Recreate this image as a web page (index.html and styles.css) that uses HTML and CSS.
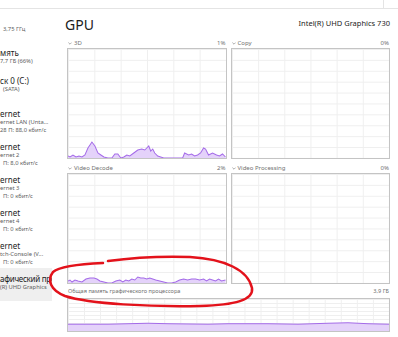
FILE: index.html
```html
<!DOCTYPE html>
<html lang="ru">
<head>
<meta charset="utf-8">
<title>GPU</title>
<link rel="stylesheet" href="styles.css">
</head>
<body>
<div class="topbar"><span class="topbar-tick"></span></div>
<div class="layout">
  <nav class="sidebar">
    <div class="item item-cpu"><div class="sub sub-in">3,75 ГГц</div></div>
    <div class="item item-mem"><div class="title">мять</div><div class="sub">7,7 ГБ (66%)</div></div>
    <div class="item"><div class="title">ск 0 (C:)</div><div class="sub sub-in">(SATA)</div></div>
    <div class="item"><div class="title">ernet</div><div class="sub">ernet LAN (Unta...</div><div class="sub">28 П: 88,0 кбит/с</div></div>
    <div class="item"><div class="title">ernet</div><div class="sub">ernet 2</div><div class="sub sub-in">П: 8,0 кбит/с</div></div>
    <div class="item"><div class="title">ernet</div><div class="sub">ernet 3</div><div class="sub sub-in">П: 0 кбит/с</div></div>
    <div class="item"><div class="title">ernet</div><div class="sub">ernet 4</div><div class="sub sub-in">П: 0 кбит/с</div></div>
    <div class="item"><div class="title">ernet</div><div class="sub">tch-Console (V...</div><div class="sub sub-in">П: 0 кбит/с</div></div>
    <div class="item item-sel"><div class="title title-tight">афический про</div><div class="sub">(R) UHD Graphics</div></div>
  </nav>
  <main class="main">
    <header class="head">
      <h1 class="head-title">GPU</h1>
      <div class="head-model">Intel(R) UHD Graphics 730</div>
    </header>
    <div class="charts">
      <section class="chart">
        <div class="label"><span class="label-name"><svg class="chev" viewBox="0 0 4 3"><polyline points="0.4,0.6 2,2.2 3.6,0.6"/></svg>3D</span><span>1%</span></div>
        <div class="plot">
          <svg class="plot-svg" viewBox="0 0 158 109" preserveAspectRatio="none">
            <path class="area" d="M0,109 L0,107 2,108 5,106 8,108 11,107 14,108 17,106 20,99 24,93 27,97 30,104 33,106 36,108 40,109 44,109 47,105 50,105 53,109 56,108 59,106 62,107 66,104 70,101 74,100 77,101 79,99 81,97 83,102 85,100 87,104 90,107 93,108 96,109 115,109 117,104 121,106 124,105 127,107 130,106 133,104 136,99 138,100 141,106 145,104 149,106 152,107 155,105 158,108 L158,109 Z"/>
            <polyline class="line" points="0,107 2,108 5,106 8,108 11,107 14,108 17,106 20,99 24,93 27,97 30,104 33,106 36,108 40,109 44,109 47,105 50,105 53,109 56,108 59,106 62,107 66,104 70,101 74,100 77,101 79,99 81,97 83,102 85,100 87,104 90,107 93,108 96,109 115,109 117,104 121,106 124,105 127,107 130,106 133,104 136,99 138,100 141,106 145,104 149,106 152,107 155,105 158,108"/>
          </svg>
        </div>
      </section>
      <section class="chart">
        <div class="label"><span class="label-name"><svg class="chev" viewBox="0 0 4 3"><polyline points="0.4,0.6 2,2.2 3.6,0.6"/></svg>Copy</span><span>0%</span></div>
        <div class="plot"></div>
      </section>
      <section class="chart">
        <div class="label"><span class="label-name"><svg class="chev" viewBox="0 0 4 3"><polyline points="0.4,0.6 2,2.2 3.6,0.6"/></svg>Video Decode</span><span>2%</span></div>
        <div class="plot">
          <svg class="plot-svg" viewBox="0 0 158 109" preserveAspectRatio="none">
            <path class="area" d="M0,109 L0,107 2,106 4,108 7,106 10,107 14,108 18,105 22,104 26,104 29,105 32,107 36,108 40,109 44,109 48,107 52,106 55,108 58,106 61,107 64,105 67,106 70,103 73,104 76,104 79,105 82,104 85,105 88,106 92,107 96,108 100,109 104,109 108,108 112,106 116,105 120,106 124,105 128,105 132,106 136,105 139,107 142,105 145,106 148,107 151,105 154,107 158,106 L158,109 Z"/>
            <polyline class="line" points="0,107 2,106 4,108 7,106 10,107 14,108 18,105 22,104 26,104 29,105 32,107 36,108 40,109 44,109 48,107 52,106 55,108 58,106 61,107 64,105 67,106 70,103 73,104 76,104 79,105 82,104 85,105 88,106 92,107 96,108 100,109 104,109 108,108 112,106 116,105 120,106 124,105 128,105 132,106 136,105 139,107 142,105 145,106 148,107 151,105 154,107 158,106"/>
          </svg>
        </div>
      </section>
      <section class="chart">
        <div class="label"><span class="label-name"><svg class="chev" viewBox="0 0 4 3"><polyline points="0.4,0.6 2,2.2 3.6,0.6"/></svg>Video Processing</span><span>0%</span></div>
        <div class="plot"></div>
      </section>
    </div>
    <div class="label mem-label"><span>Общая память графического процессора</span><span>3,9 ГБ</span></div>
    <div class="plot mem-plot">
      <svg class="plot-svg" viewBox="0 0 321 33" preserveAspectRatio="none">
        <path class="area" d="M0,33 L0,26 40,26 60,25.5 80,25 100,25.5 140,26 160,25.5 200,25.5 230,26 260,25 280,24.5 300,25.5 321,26 L321,33 Z"/>
        <polyline class="line" points="0,26 40,26 60,25.5 80,25 100,25.5 140,26 160,25.5 200,25.5 230,26 260,25 280,24.5 300,25.5 321,26"/>
      </svg>
    </div>
  </main>
</div>
<svg class="annot" viewBox="0 0 398 337">
  <path d="M108,261 C130,258 160,256 190,257 C225,259 248,270 252,288 C254,300 235,305 200,306 C150,307 90,304 65,296 C50,290 47,280 53,272 C60,266 80,264 103,263"/>
</svg>
</body>
</html>
```
FILE: styles.css
```css
* { box-sizing: border-box; }
html, body { margin: 0; padding: 0; }
body {
  width: 398px;
  height: 337px;
  overflow: hidden;
  position: relative;
  background: #fff;
  color: #1b1b1b;
  font-family: "Noto Sans", "Open Sans", sans-serif;
}
.topbar {
  height: 9px;
  border-bottom: 1px solid #e4e4e4;
  display: flex;
  justify-content: flex-end;
  padding-right: 14px;
}
.topbar-tick { width: 1px; height: 8px; background: #e4e4e4; }
.layout { display: flex; height: 328px; }
.sidebar {
  width: 52px;
  flex: none;
  overflow: hidden;
  white-space: nowrap;
}
.item { height: 33px; padding-top: 6px; }
.item-cpu { height: 32px; padding-top: 16px; }
.item-mem { height: 29px; padding-top: 6.5px; }
.item-sel { background: #efefef; }
.title { font-size: 8px; line-height: 9px; height: 9px; color: #1b1b1b; }
.title-tight { letter-spacing: -0.3px; }
.sub { font-size: 5.8px; line-height: 8px; height: 8px; color: #606060; }
.sub-in { padding-left: 3px; }
.main {
  flex: 1;
  padding: 0 8px 0 15px;
  display: flex;
  flex-direction: column;
}
.head {
  height: 29px;
  display: flex;
  justify-content: space-between;
  align-items: flex-start;
}
.head-title {
  margin: 9px 0 0 -2px;
  font-size: 14px;
  line-height: 14px;
  font-weight: 400;
}
.head-model { margin-top: 10px; font-size: 7.5px; line-height: 8px; }
.charts {
  display: grid;
  grid-template-columns: 1fr 1fr;
  gap: 4px 4px;
}
.label {
  height: 10px;
  display: flex;
  justify-content: space-between;
  align-items: center;
  font-size: 6px;
  line-height: 8px;
  color: #707070;
  padding: 0 1px;
  white-space: nowrap;
}
.label-name { display: flex; align-items: center; }
.chev {
  width: 4px;
  height: 3px;
  margin-right: 2px;
  fill: none;
  stroke: #8a8a8a;
  stroke-width: 0.7;
}
.plot {
  height: 111px;
  border: 1px solid #c4c4c4;
  background-color: #fff;
  background-image:
    linear-gradient(to right, #efefef 1px, transparent 1px),
    linear-gradient(to bottom, #efefef 1px, transparent 1px);
  background-size: calc(100% / 6) 100%, 100% 10%;
}
.plot-svg { display: block; width: 100%; height: 100%; }
.area { fill: #e4d2fa; }
.line { fill: none; stroke: #a46be8; stroke-width: 1; vector-effect: non-scaling-stroke; }
.mem-label { height: 14px; font-size: 5.6px; }
.mem-plot {
  height: 34px;
  background-size: calc(100% / 20) 100%, 100% calc(100% / 8);
}
.annot {
  position: absolute;
  left: 0;
  top: 0;
  width: 398px;
  height: 337px;
  pointer-events: none;
}
.annot path {
  fill: none;
  stroke: #e3121b;
  stroke-width: 2.5;
  stroke-linecap: round;
  stroke-linejoin: round;
}
```
